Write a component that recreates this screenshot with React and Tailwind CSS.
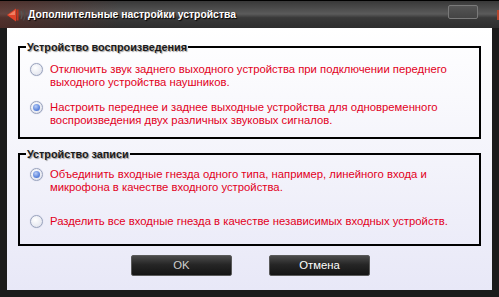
import React from "react";

const font = { fontFamily: '"Liberation Sans", Arial, sans-serif' };

function Radio({ checked }) {
  return (
    <span className="relative flex h-[13px] w-[13px] shrink-0 items-center justify-center rounded-full border border-[#9aa3bd] bg-[radial-gradient(circle_at_40%_35%,#ffffff,#e6e8f0_70%,#c9cde0)] shadow-[0_0_1px_#b8bfd8]">
      {checked && (
        <span className="h-[7px] w-[7px] rounded-full bg-[radial-gradient(circle_at_40%_35%,#b9cdf7,#5e86dc_60%,#3d66c4)]" />
      )}
    </span>
  );
}

function Option({ checked, lines }) {
  return (
    <div className="flex items-start gap-[7px]">
      <Radio checked={checked} />
      <div className="text-[11.3px] leading-[13px] text-[#e2001c]">
        {lines.map((l, i) => (
          <div key={i} className="whitespace-nowrap">{l}</div>
        ))}
      </div>
    </div>
  );
}

function Group({ title, children, className }) {
  return (
    <fieldset className={"border-2 border-black " + className}>
      <legend className="ml-[6px] px-[1px] text-[10.8px] font-bold leading-[14px] text-[#1a1a1a] [text-shadow:1px_1px_1px_#9a9a9a]">
        {title}
      </legend>
      {children}
    </fieldset>
  );
}

export default function App() {
  return (
    <div
      className="flex h-[297px] w-[499px] flex-col overflow-hidden bg-[#1b1b1b]"
      style={font}
    >
      {/* title bar */}
      <div className="relative flex h-[28px] shrink-0 items-center border-t border-black bg-[linear-gradient(to_bottom,#383838_0%,#4a4a4a_25%,#5b5b5b_48%,#393939_62%,#2e2e2e_100%)]">
        <div className="absolute inset-y-0 left-0 w-[120px] bg-[linear-gradient(to_right,rgba(110,40,30,0.45),rgba(110,40,30,0))]" />
        <svg className="relative ml-[5px]" width="22" height="18" viewBox="0 0 22 18">
          <path d="M2 9 L11 2.5 L11 15.5 Z" fill="#e0432a" />
          <path d="M3.5 9 L10 4.5 L10 9 Z" fill="#f59a7a" opacity="0.7" />
          <rect x="11.5" y="3.5" width="2" height="11" fill="#c2351f" />
          <path d="M16 5 Q18 9 16 13" stroke="#555" strokeWidth="1.2" fill="none" />
          <path d="M18.5 3.5 Q21.5 9 18.5 14.5" stroke="#4a4a4a" strokeWidth="1.2" fill="none" />
        </svg>
        <span className="relative ml-[1px] text-[10.4px] font-bold text-white [text-shadow:1px_1px_1px_#000]">
          Дополнительные настройки устройства
        </span>
        <div className="absolute right-[21px] top-[4px] h-[14px] w-[30px] rounded-[2px] border border-[#7a7a7a] bg-[linear-gradient(to_bottom,#555,#444)]" />
        <div className="absolute right-0 top-[9px] h-[10px] w-[2px] bg-[#b5442c]" />
      </div>

      {/* body */}
      <div className="mx-[7px] mb-[7px] flex flex-1 flex-col bg-[linear-gradient(to_bottom,#ffffff,#e8e8f7)] px-[11px] pt-[12px]">
        <Group title="Устройство воспроизведения">
          <div className="flex flex-col gap-[12px] pb-[10px] pl-[10px] pt-[9px]">
            <Option
              lines={[
                "Отключить звук заднего выходного устройства при подключении переднего",
                "выходного устройства наушников.",
              ]}
            />
            <Option
              checked
              lines={[
                "Настроить переднее и заднее выходные устройства для одновременного",
                "воспроизведения двух различных звуковых сигналов.",
              ]}
            />
          </div>
        </Group>
        <Group title="Устройство записи" className="mt-[8px]">
          <div className="flex flex-col gap-[21px] pb-[16px] pl-[10px] pt-[7px]">
            <Option
              checked
              lines={[
                "Объединить входные гнезда одного типа, например, линейного входа и",
                "микрофона в качестве входного устройства.",
              ]}
            />
            <Option
              lines={[
                "Разделить все входные гнезда в качестве независимых входных устройств.",
              ]}
            />
          </div>
        </Group>
        <div className="mt-[9px] flex justify-center gap-[37px] pl-[2px]">
          <button className="h-[21px] w-[101px] rounded-[2px] border border-[#5a5a5a] bg-[linear-gradient(to_bottom,#4a4a4a,#262626_45%,#141414)] text-[11.3px] text-[#cfcfcf]">
            OK
          </button>
          <button className="h-[21px] w-[101px] rounded-[2px] border border-[#5a5a5a] bg-[linear-gradient(to_bottom,#4a4a4a,#262626_45%,#141414)] text-[11.3px] text-white">
            Отмена
          </button>
        </div>
      </div>
    </div>
  );
}
